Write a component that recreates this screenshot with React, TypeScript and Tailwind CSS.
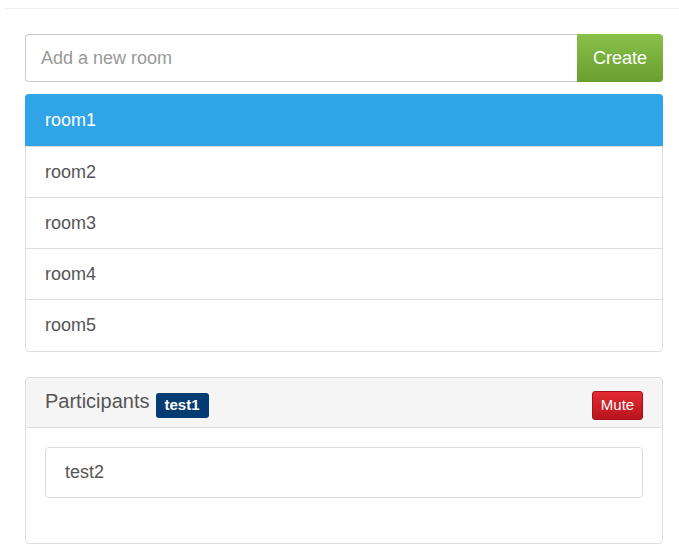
import React from "react";

export default function App() {
  const rooms = ["room1", "room2", "room3", "room4", "room5"];
  return (
    <div className="min-h-[546px] w-[679px] bg-white text-[#555555]" style={{ fontFamily: '"Liberation Sans", Arial, sans-serif' }}>
      <div className="pt-[8px] pl-[5px]">
        <div className="border-t border-[#eeeeee]" />
      </div>
      <div className="ml-[25px] w-[638px] pt-[25px]">
        <div className="flex h-[48px]">
          <div className="flex flex-1 items-center rounded-l-[4px] border border-r-0 border-[#cccccc] pl-[15px] text-[18px] text-[#999999]">
            Add a new room
          </div>
          <div className="flex w-[86px] items-center justify-center rounded-r-[4px] bg-gradient-to-b from-[#88c149] to-[#699f2f] text-[18px] text-white">
            Create
          </div>
        </div>
        <div className="mt-[12px] rounded-[4px] border border-[#dddddd] pb-px">
          {rooms.map((r, i) => (
            <div
              key={r}
              className={
                i === 0
                  ? "-mx-px -mt-px flex h-[52px] items-center rounded-t-[4px] bg-[#2fa4e7] px-[20px] text-[18px] text-white"
                  : "flex h-[51px] items-center border-t border-[#dddddd] px-[19px] text-[18px] text-[#555555]"
              }
            >
              {r}
            </div>
          ))}
        </div>
        <div className="mt-[25px] rounded-[4px] border border-[#dddddd]">
          <div className="flex h-[50px] items-center justify-between rounded-t-[4px] border-b border-[#dddddd] bg-[#f5f5f5] pl-[19px] pr-[19px] pt-[5px]">
            <div className="flex items-center">
              <span className="-mt-[8px] text-[20px] text-[#555555]">Participants</span>
              <span className="ml-[6px] flex h-[25px] w-[53px] items-center justify-center rounded-[3px] bg-[#033c73] text-[15px] font-bold text-white">
                test1
              </span>
            </div>
            <div className="flex h-[29px] w-[51px] items-center justify-center rounded-[3px] border border-[#a5121a] bg-gradient-to-b from-[#e22a31] to-[#b9141c] text-[15px] text-white">
              Mute
            </div>
          </div>
          <div className="px-[19px] pt-[19px] pb-[45px]">
            <div className="flex h-[51px] items-center rounded-[4px] border border-[#dddddd] px-[19px] text-[18px] text-[#555555]">
              test2
            </div>
          </div>
        </div>
      </div>
    </div>
  );
}
